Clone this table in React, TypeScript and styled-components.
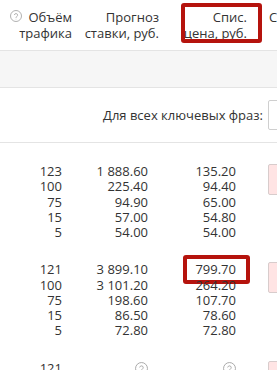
import React from 'react';
import styled, { createGlobalStyle } from 'styled-components';

const Global = createGlobalStyle`
  html, body { margin: 0; padding: 0; background: #fff; overflow: hidden; }
  body {
    font-family: "Open Sans", "Noto Sans", sans-serif;
    font-size: 13px;
    color: #333;
  }
`;

const COLS = '72px 87px 88px 1fr';

const Page = styled.div`
  width: 460px;
`;

const HeaderRow = styled.div`
  display: grid;
  grid-template-columns: ${COLS};
  height: 50px;
  border-bottom: 1px solid #e4e4e4;
  background: #fff;
`;

const HeaderCell = styled.div<{ $left?: boolean }>`
  position: relative;
  padding-top: 9px;
  padding-left: ${p => (p.$left ? '22px' : '0')};
  line-height: 16px;
  text-align: ${p => (p.$left ? 'left' : 'right')};
  white-space: nowrap;
`;

const Mark = styled.div<{ $t: number; $r: number; $b: number; $l: number }>`
  position: absolute;
  top: ${p => p.$t}px;
  right: ${p => p.$r}px;
  bottom: ${p => p.$b}px;
  left: ${p => p.$l}px;
  border: 4px solid #b5130d;
  border-radius: 3px;
  box-sizing: border-box;
  pointer-events: none;
`;

const Band = styled.div`
  height: 36px;
  background: #f6f6f6;
  border-bottom: 1px solid #e4e4e4;
`;

const FilterRow = styled.div`
  display: flex;
  align-items: center;
  height: 54px;
  border-bottom: 1px solid #e4e4e4;
`;

const FilterLabel = styled.div`
  width: 263px;
  text-align: right;
  white-space: nowrap;
`;

const FilterInput = styled.div`
  margin-left: 5px;
  width: 150px;
  height: 30px;
  box-sizing: border-box;
  border: 1px solid #cfcfcf;
  border-radius: 2px;
  background: #fff;
`;

const Group = styled.div`
  display: grid;
  grid-template-columns: ${COLS};
  padding: 21px 0 1px;
`;

const ValueCol = styled.div<{ $pad: number }>`
  display: flex;
  flex-direction: column;
  align-items: flex-end;
  padding-right: ${p => p.$pad}px;
  line-height: 15.25px;
  white-space: nowrap;
`;

const Value = styled.div`
  position: relative;
  height: 15.25px;
`;

const PinkField = styled.div`
  margin-left: 21px;
  width: 90px;
  height: 31px;
  box-sizing: border-box;
  background: #ffe4e4;
  border: 1px solid #d8cccc;
  border-radius: 2px;
`;

const IconWrap = styled.span<{ $gap: number }>`
  display: inline-block;
  margin-right: ${p => p.$gap}px;
`;

const HelpIcon: React.FC<{ size: number }> = ({ size }) => (
  <svg width={size} height={size} viewBox="0 0 24 24" fill="none" stroke="#a3a3a3" strokeWidth={1.7} style={{ display: 'block' }}>
    <circle cx="12" cy="12" r="11" />
    <path d="M8.8 9.3a3.3 3.3 0 0 1 6.4 1.1c0 2.2-3.2 2.6-3.2 4.6" strokeLinecap="round" />
    <circle cx="12" cy="18.2" r="0.9" fill="#a3a3a3" stroke="none" />
  </svg>
);

type Cell = string | { icon: true } | { mark: true; text: string };

const groups: Cell[][][] = [
  [
    ['123', '100', '75', '15', '5'],
    ['1 888.60', '225.40', '94.90', '57.00', '54.00'],
    ['135.20', '94.40', '65.00', '54.80', '54.00'],
  ],
  [
    ['121', '100', '75', '15', '5'],
    ['3 899.10', '3 101.20', '198.60', '86.50', '72.80'],
    [{ mark: true, text: '799.70' }, '264.20', '107.70', '78.60', '72.80'],
  ],
  [
    ['121', '100', '75', '15', '5'],
    [{ icon: true }, '225.40', '94.90', '57.00', '54.00'],
    [{ icon: true }, '94.40', '65.00', '54.80', '54.00'],
  ],
];

const renderCell = (c: Cell, i: number) => {
  if (typeof c === 'string') return <Value key={i}>{c}</Value>;
  if ('icon' in c)
    return (
      <Value key={i}>
        <span style={{ display: 'inline-block', paddingTop: 1 }}>
          <HelpIcon size={13} />
        </span>
      </Value>
    );
  return (
    <Value key={i}>
      {c.text}
      <Mark $t={-7} $r={-14} $b={-6} $l={-12} />
    </Value>
  );
};

export default function App() {
  return (
    <Page>
      <Global />
      <HeaderRow>
        <HeaderCell>
          <IconWrap $gap={6} style={{ verticalAlign: 'baseline' }}>
            <HelpIcon size={12} />
          </IconWrap>
          Объём
          <br />
          трафика
        </HeaderCell>
        <HeaderCell>
          Прогноз
          <br />
          ставки, руб.
        </HeaderCell>
        <HeaderCell>
          Спис.
          <br />
          цена, руб.
          <Mark $t={3} $r={-15} $b={7} $l={22} />
        </HeaderCell>
        <HeaderCell $left>Ставка</HeaderCell>
      </HeaderRow>
      <Band />
      <FilterRow>
        <FilterLabel>Для всех ключевых фраз:</FilterLabel>
        <FilterInput />
      </FilterRow>
      {groups.map((g, gi) => (
        <Group key={gi}>
          {g.map((col, ci) => (
            <ValueCol key={ci} $pad={ci === 0 ? 10 : 11}>
              {col.map(renderCell)}
            </ValueCol>
          ))}
          <div>
            <PinkField />
          </div>
        </Group>
      ))}
    </Page>
  );
}
